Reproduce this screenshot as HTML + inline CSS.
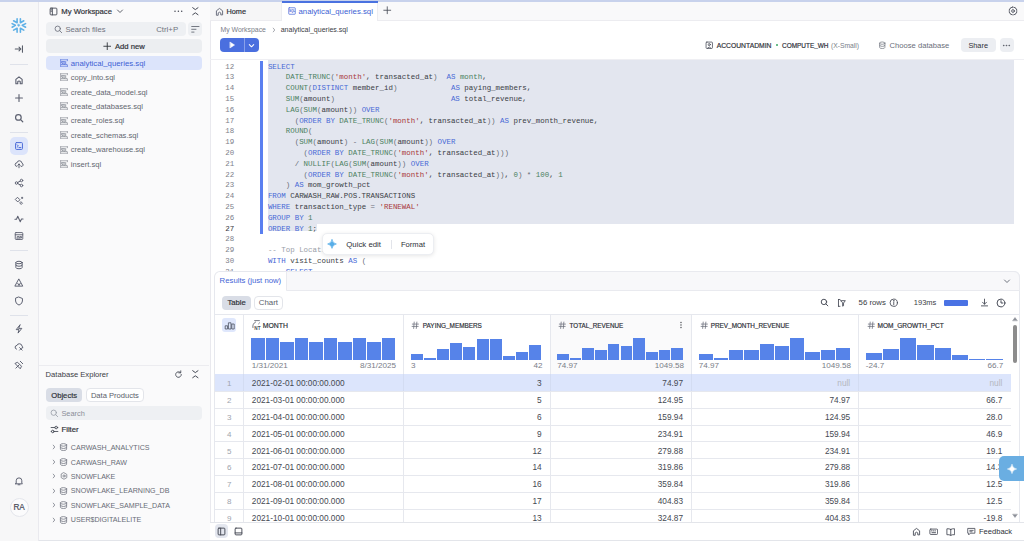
<!DOCTYPE html><html><head><meta charset="utf-8"><style>
html,body{margin:0;padding:0;width:1024px;height:541px;overflow:hidden;background:#fff;font-family:"Liberation Sans",sans-serif;}
.t{position:absolute;white-space:nowrap;}
.code{position:absolute;font-family:"Liberation Mono",monospace;font-size:7.45px;white-space:pre;line-height:10.75px;color:#3a3d45;}
.k{color:#4869d6}.f{color:#4a7f5e}.s{color:#a8383a}.c{color:#9a9ea8}.p{color:#6a6e78}
</style></head><body>
<div style="position:absolute;left:0px;top:0px;width:1024px;height:2px;background:#c8d2ec"></div>
<div style="position:absolute;left:0px;top:2px;width:38px;height:539px;background:#f7f7f8;border-right:1px solid #e9e9ee"></div>
<svg style="position:absolute;left:10px;top:17px" width="18" height="17" viewBox="10 17 18 17" fill="none" stroke="#5eb0e6" stroke-width="1.6" stroke-linecap="round" stroke-linejoin="round"><path d="M17.1 18.8 V22.7 L13.6 20.8 M20.4 18.8 V22.7 L23.8 20.8 M12.1 23.6 L15.3 25.3 L12.1 27.2 M25.6 23.6 L22.3 25.3 L25.6 27.2 M17.1 32.2 V28.2 L13.6 30.1 M20.4 32.2 V28.2 L23.8 30.1"/><path d="M18.75 24.1 L19.9 25.3 L18.75 26.5 L17.6 25.3 Z" fill="#5eb0e6" stroke-width="0.6"/></svg>
<svg style="position:absolute;left:14.00px;top:44.30px" width="10" height="10" viewBox="0 0 16 16" fill="none" stroke="#555a66" stroke-width="1.68" stroke-linecap="round" stroke-linejoin="round"><path d="M2 8 H11 M8 5 L11 8 L8 11 M13.5 3 V13"/></svg>
<div style="position:absolute;left:10px;top:64px;width:18px;height:1px;background:#dfe2ea"></div>
<svg style="position:absolute;left:14.00px;top:74.50px" width="10" height="10" viewBox="0 0 16 16" fill="none" stroke="#5c6070" stroke-width="1.80" stroke-linecap="round" stroke-linejoin="round"><path d="M3 14 V7 L8 3 L13 7 V14 H10 V10.5 Q8 8.5 6 10.5 V14 Z"/></svg>
<svg style="position:absolute;left:14.00px;top:93.30px" width="10" height="10" viewBox="0 0 16 16" fill="none" stroke="#5c6070" stroke-width="1.80" stroke-linecap="round" stroke-linejoin="round"><path d="M8 2.5 V13.5 M2.5 8 H13.5"/></svg>
<svg style="position:absolute;left:14.00px;top:112.50px" width="10" height="10" viewBox="0 0 16 16" fill="none" stroke="#5c6070" stroke-width="1.92" stroke-linecap="round" stroke-linejoin="round"><circle cx="7" cy="7" r="4.5"/><path d="M10.5 10.5 L14 14"/></svg>
<div style="position:absolute;left:10px;top:132px;width:18px;height:1px;background:#dfe2ea"></div>
<div style="position:absolute;left:10px;top:137.3px;width:18px;height:18px;background:#dce4fb;border-radius:5px"></div>
<svg style="position:absolute;left:14.00px;top:141.20px" width="10" height="10" viewBox="0 0 16 16" fill="none" stroke="#4a6ad8" stroke-width="1.56" stroke-linecap="round" stroke-linejoin="round"><rect x="2.5" y="2.5" width="11" height="11" rx="1.5"/><path d="M5 6 L7 8 L5 10 M8 10.5 H11"/></svg>
<svg style="position:absolute;left:14.00px;top:159.40px" width="10" height="10" viewBox="0 0 16 16" fill="none" stroke="#5c6070" stroke-width="1.56" stroke-linecap="round" stroke-linejoin="round"><path d="M4.5 12 Q1.5 11.5 1.8 8.5 Q2.2 6 4.8 6 Q5.5 2.5 9 2.8 Q12.5 3.2 12.8 6.8 Q15 7.5 14.5 10 Q14 12 11.5 12 M8 8 V14 M6 10 L8 8 L10 10"/></svg>
<svg style="position:absolute;left:14.00px;top:177.50px" width="10" height="10" viewBox="0 0 16 16" fill="none" stroke="#5c6070" stroke-width="1.56" stroke-linecap="round" stroke-linejoin="round"><circle cx="4" cy="8" r="2"/><circle cx="12" cy="4" r="2"/><circle cx="12" cy="12" r="2"/><path d="M6 7 L10 5 M6 9 L10 11"/></svg>
<svg style="position:absolute;left:14.00px;top:195.50px" width="10" height="10" viewBox="0 0 16 16" fill="none" stroke="#5c6070" stroke-width="1.56" stroke-linecap="round" stroke-linejoin="round"><path d="M6 2.5 L9.5 6 L6 9.5 L2.5 6 Z M11.5 9.5 L13.5 11.5 L11.5 13.5 L9.5 11.5 Z M13 2 V4 M12 3 H14"/></svg>
<svg style="position:absolute;left:14.00px;top:213.70px" width="10" height="10" viewBox="0 0 16 16" fill="none" stroke="#5c6070" stroke-width="1.68" stroke-linecap="round" stroke-linejoin="round"><path d="M1.5 8.5 H4 L6 3.5 L10 12.5 L12 8 H14.5"/></svg>
<svg style="position:absolute;left:14.00px;top:231.40px" width="10" height="10" viewBox="0 0 16 16" fill="none" stroke="#5c6070" stroke-width="1.44" stroke-linecap="round" stroke-linejoin="round"><rect x="2" y="2.5" width="12" height="11" rx="1.2"/><path d="M2 6 H14 M5 13.5 V9 H8 V13.5 M10 9 H12 V11 H10 Z"/></svg>
<div style="position:absolute;left:10px;top:250px;width:18px;height:1px;background:#dfe2ea"></div>
<svg style="position:absolute;left:14.00px;top:259.90px" width="10" height="10" viewBox="0 0 16 16" fill="none" stroke="#5c6070" stroke-width="1.56" stroke-linecap="round" stroke-linejoin="round"><ellipse cx="8" cy="4" rx="5" ry="2"/><path d="M3 4 V12 Q3 14 8 14 Q13 14 13 12 V4 M3 8 Q3 10 8 10 Q13 10 13 8"/></svg>
<svg style="position:absolute;left:14.00px;top:277.80px" width="10" height="10" viewBox="0 0 16 16" fill="none" stroke="#5c6070" stroke-width="1.56" stroke-linecap="round" stroke-linejoin="round"><path d="M8 2 L14 13 H2 Z M6 8.5 L8 12 L10 8.5"/></svg>
<svg style="position:absolute;left:14.00px;top:296.00px" width="10" height="10" viewBox="0 0 16 16" fill="none" stroke="#5c6070" stroke-width="1.56" stroke-linecap="round" stroke-linejoin="round"><path d="M8 1.8 L13.5 4 V8 Q13.5 12.5 8 14.5 Q2.5 12.5 2.5 8 V4 Z"/></svg>
<div style="position:absolute;left:10px;top:315px;width:18px;height:1px;background:#dfe2ea"></div>
<svg style="position:absolute;left:14.00px;top:323.70px" width="10" height="10" viewBox="0 0 16 16" fill="none" stroke="#5c6070" stroke-width="1.56" stroke-linecap="round" stroke-linejoin="round"><path d="M9.5 1.5 L3.5 9 H8 L6.5 14.5 L12.5 7 H8 Z"/></svg>
<svg style="position:absolute;left:14.00px;top:341.90px" width="10" height="10" viewBox="0 0 16 16" fill="none" stroke="#5c6070" stroke-width="1.56" stroke-linecap="round" stroke-linejoin="round"><path d="M4 11.5 Q1.5 11 1.8 8 Q2.2 5.5 4.8 5.5 Q5.5 2.5 9 2.8 Q12.5 3.2 12.8 6.5 Q14.5 7.5 14 9.5 M9 9 L13 13 M9 13 L13 9"/></svg>
<svg style="position:absolute;left:14.00px;top:359.90px" width="10" height="10" viewBox="0 0 16 16" fill="none" stroke="#5c6070" stroke-width="1.56" stroke-linecap="round" stroke-linejoin="round"><path d="M3 13 L8 8 M6 4 L12 10 L10 14 L2 6 Z M10 2 L14 6"/></svg>
<svg style="position:absolute;left:14.00px;top:475.80px" width="10" height="10" viewBox="0 0 16 16" fill="none" stroke="#5c6070" stroke-width="1.56" stroke-linecap="round" stroke-linejoin="round"><path d="M3.5 11.5 V7.5 Q3.5 3 8 3 Q12.5 3 12.5 7.5 V11.5 L13.5 12.5 H2.5 Z M6.5 14 H9.5"/></svg>
<div style="position:absolute;left:9.5px;top:497.7px;width:19px;height:19px;box-sizing:border-box;border:1px solid #e4e6ec;border-radius:50%;background:#fbfbfc"></div>
<div class="t" style="left:-31.00px;width:100px;text-align:center;top:502.30px;font-size:8.2px;color:#454955;font-weight:400;line-height:12px;letter-spacing:-0.3px;-webkit-text-stroke:0.18px #454955;">RA</div>
<div style="position:absolute;left:39px;top:2px;width:171px;height:539px;background:#fafafb;border-right:1px solid #e9e9ee"></div>
<svg style="position:absolute;left:49.00px;top:6.70px" width="9" height="9" viewBox="0 0 16 16" fill="none" stroke="#444854" stroke-width="1.56" stroke-linecap="round" stroke-linejoin="round"><rect x="2" y="2" width="12" height="12" rx="1.5"/><path d="M6 2 V14 M3.5 5 H4.5 M3.5 7.5 H4.5"/></svg>
<div class="t" style="left:61.3px;top:5.90px;font-size:7.69px;color:#2e3138;font-weight:400;line-height:12px;-webkit-text-stroke:0.18px #2e3138;">My Workspace</div>
<svg style="position:absolute;left:115.60px;top:7.20px" width="8" height="8" viewBox="0 0 16 16" fill="none" stroke="#444854" stroke-width="1.68" stroke-linecap="round" stroke-linejoin="round"><path d="M3 6 L8 11 L13 6"/></svg>
<svg style="position:absolute;left:170px;top:6px" width="16" height="10" viewBox="170 6 16 10" fill="#444854" stroke="#444854" stroke-width="0" stroke-linecap="round" stroke-linejoin="round"><circle cx="175" cy="11.3" r="0.75"/><circle cx="178.35" cy="11.3" r="0.75"/><circle cx="181.7" cy="11.3" r="0.75"/></svg>
<svg style="position:absolute;left:190px;top:5px" width="10" height="12" viewBox="190 5 10 12" fill="none" stroke="#444854" stroke-width="1.0" stroke-linecap="round" stroke-linejoin="round"><path d="M192.7 7.7 L195.3 9.6 L198 7.7 M192.7 14.7 L195.3 12.8 L198 14.7"/></svg>
<div style="position:absolute;left:46.2px;top:22.1px;width:139.4px;height:14px;background:#eef0f3;border-radius:4px"></div>
<svg style="position:absolute;left:53.75px;top:24.95px" width="8.5" height="8.5" viewBox="0 0 16 16" fill="none" stroke="#6a6e7a" stroke-width="1.56" stroke-linecap="round" stroke-linejoin="round"><circle cx="7" cy="7" r="5"/><path d="M10.7 10.7 L14.5 14.5"/></svg>
<div class="t" style="left:65.5px;top:23.90px;font-size:7.66px;color:#6f7380;font-weight:400;line-height:12px;">Search files</div>
<div class="t" style="right:845.90px;top:23.90px;font-size:7.8px;color:#6f7380;font-weight:400;line-height:12px;">Ctrl+P</div>
<div style="position:absolute;left:188px;top:22.1px;width:14.2px;height:14px;background:#eef0f3;border-radius:4px"></div>
<svg style="position:absolute;left:189px;top:24px" width="12" height="10" viewBox="189 24 12 10" fill="none" stroke="#555a66" stroke-width="0.8" stroke-linecap="round" stroke-linejoin="round"><path d="M191.7 26.5 H199 M191.7 29.3 H196 M191.7 32.1 H194"/></svg>
<div style="position:absolute;left:46.2px;top:39.1px;width:156px;height:14.1px;background:#eceef1;border-radius:4px"></div>
<svg style="position:absolute;left:102.95px;top:41.85px" width="8.5" height="8.5" viewBox="0 0 16 16" fill="none" stroke="#2e3138" stroke-width="1.68" stroke-linecap="round" stroke-linejoin="round"><path d="M8 1.5 V14.5 M1.5 8 H14.5"/></svg>
<div class="t" style="left:114.9px;top:40.80px;font-size:7.68px;color:#2e3138;font-weight:400;line-height:12px;-webkit-text-stroke:0.18px #2e3138;">Add new</div>
<div style="position:absolute;left:46.2px;top:56.1px;width:156px;height:13.9px;background:#dce4fb;border-radius:4px"></div>
<svg style="position:absolute;left:59.60px;top:59.00px" width="8" height="8" viewBox="0 0 16 16" fill="none" stroke="#4464d6" stroke-width="1.20" stroke-linecap="round" stroke-linejoin="round"><path d="M1.2 1.5 H14.8 M1.2 14.5 H14.8 M1.2 1.5 V14.5 M14.8 1.5 V3.5 M14.8 12.5 V14.5" stroke-width="1.2"/><path d="M5.4 5 H2.8 V7.8 H5.2 V11 H2.6 M7 5 H9.6 V11 H7 Z M9 10 L10.4 11.6 M11.4 5 V11 H14" stroke-width="1.25"/></svg>
<div class="t" style="left:70.8px;top:57.70px;font-size:7.79px;color:#3c5fd4;font-weight:400;line-height:12px;">analytical<span style="position:relative;top:-0.8px">_</span>queries.sql</div>
<svg style="position:absolute;left:59.60px;top:73.43px" width="8" height="8" viewBox="0 0 16 16" fill="none" stroke="#7c808a" stroke-width="1.20" stroke-linecap="round" stroke-linejoin="round"><path d="M1.2 1.5 H14.8 M1.2 14.5 H14.8 M1.2 1.5 V14.5 M14.8 1.5 V3.5 M14.8 12.5 V14.5" stroke-width="1.2"/><path d="M5.4 5 H2.8 V7.8 H5.2 V11 H2.6 M7 5 H9.6 V11 H7 Z M9 10 L10.4 11.6 M11.4 5 V11 H14" stroke-width="1.25"/></svg>
<div class="t" style="left:70.8px;top:72.13px;font-size:7.58px;color:#62666f;font-weight:400;line-height:12px;">copy<span style="position:relative;top:-0.8px">_</span>into.sql</div>
<svg style="position:absolute;left:59.60px;top:87.86px" width="8" height="8" viewBox="0 0 16 16" fill="none" stroke="#7c808a" stroke-width="1.20" stroke-linecap="round" stroke-linejoin="round"><path d="M1.2 1.5 H14.8 M1.2 14.5 H14.8 M1.2 1.5 V14.5 M14.8 1.5 V3.5 M14.8 12.5 V14.5" stroke-width="1.2"/><path d="M5.4 5 H2.8 V7.8 H5.2 V11 H2.6 M7 5 H9.6 V11 H7 Z M9 10 L10.4 11.6 M11.4 5 V11 H14" stroke-width="1.25"/></svg>
<div class="t" style="left:70.8px;top:86.56px;font-size:7.58px;color:#62666f;font-weight:400;line-height:12px;">create<span style="position:relative;top:-0.8px">_</span>data<span style="position:relative;top:-0.8px">_</span>model.sql</div>
<svg style="position:absolute;left:59.60px;top:102.29px" width="8" height="8" viewBox="0 0 16 16" fill="none" stroke="#7c808a" stroke-width="1.20" stroke-linecap="round" stroke-linejoin="round"><path d="M1.2 1.5 H14.8 M1.2 14.5 H14.8 M1.2 1.5 V14.5 M14.8 1.5 V3.5 M14.8 12.5 V14.5" stroke-width="1.2"/><path d="M5.4 5 H2.8 V7.8 H5.2 V11 H2.6 M7 5 H9.6 V11 H7 Z M9 10 L10.4 11.6 M11.4 5 V11 H14" stroke-width="1.25"/></svg>
<div class="t" style="left:70.8px;top:100.99px;font-size:7.58px;color:#62666f;font-weight:400;line-height:12px;">create<span style="position:relative;top:-0.8px">_</span>databases.sql</div>
<svg style="position:absolute;left:59.60px;top:116.72px" width="8" height="8" viewBox="0 0 16 16" fill="none" stroke="#7c808a" stroke-width="1.20" stroke-linecap="round" stroke-linejoin="round"><path d="M1.2 1.5 H14.8 M1.2 14.5 H14.8 M1.2 1.5 V14.5 M14.8 1.5 V3.5 M14.8 12.5 V14.5" stroke-width="1.2"/><path d="M5.4 5 H2.8 V7.8 H5.2 V11 H2.6 M7 5 H9.6 V11 H7 Z M9 10 L10.4 11.6 M11.4 5 V11 H14" stroke-width="1.25"/></svg>
<div class="t" style="left:70.8px;top:115.42px;font-size:7.58px;color:#62666f;font-weight:400;line-height:12px;">create<span style="position:relative;top:-0.8px">_</span>roles.sql</div>
<svg style="position:absolute;left:59.60px;top:131.15px" width="8" height="8" viewBox="0 0 16 16" fill="none" stroke="#7c808a" stroke-width="1.20" stroke-linecap="round" stroke-linejoin="round"><path d="M1.2 1.5 H14.8 M1.2 14.5 H14.8 M1.2 1.5 V14.5 M14.8 1.5 V3.5 M14.8 12.5 V14.5" stroke-width="1.2"/><path d="M5.4 5 H2.8 V7.8 H5.2 V11 H2.6 M7 5 H9.6 V11 H7 Z M9 10 L10.4 11.6 M11.4 5 V11 H14" stroke-width="1.25"/></svg>
<div class="t" style="left:70.8px;top:129.85px;font-size:7.58px;color:#62666f;font-weight:400;line-height:12px;">create<span style="position:relative;top:-0.8px">_</span>schemas.sql</div>
<svg style="position:absolute;left:59.60px;top:145.58px" width="8" height="8" viewBox="0 0 16 16" fill="none" stroke="#7c808a" stroke-width="1.20" stroke-linecap="round" stroke-linejoin="round"><path d="M1.2 1.5 H14.8 M1.2 14.5 H14.8 M1.2 1.5 V14.5 M14.8 1.5 V3.5 M14.8 12.5 V14.5" stroke-width="1.2"/><path d="M5.4 5 H2.8 V7.8 H5.2 V11 H2.6 M7 5 H9.6 V11 H7 Z M9 10 L10.4 11.6 M11.4 5 V11 H14" stroke-width="1.25"/></svg>
<div class="t" style="left:70.8px;top:144.28px;font-size:7.58px;color:#62666f;font-weight:400;line-height:12px;">create<span style="position:relative;top:-0.8px">_</span>warehouse.sql</div>
<svg style="position:absolute;left:59.60px;top:160.01px" width="8" height="8" viewBox="0 0 16 16" fill="none" stroke="#7c808a" stroke-width="1.20" stroke-linecap="round" stroke-linejoin="round"><path d="M1.2 1.5 H14.8 M1.2 14.5 H14.8 M1.2 1.5 V14.5 M14.8 1.5 V3.5 M14.8 12.5 V14.5" stroke-width="1.2"/><path d="M5.4 5 H2.8 V7.8 H5.2 V11 H2.6 M7 5 H9.6 V11 H7 Z M9 10 L10.4 11.6 M11.4 5 V11 H14" stroke-width="1.25"/></svg>
<div class="t" style="left:70.8px;top:158.71px;font-size:7.58px;color:#62666f;font-weight:400;line-height:12px;">insert.sql</div>
<div style="position:absolute;left:39px;top:365px;width:170px;height:1px;background:#ececf0"></div>
<div class="t" style="left:45.6px;top:368.90px;font-size:7.62px;color:#3a3d45;font-weight:400;line-height:12px;">Database Explorer</div>
<svg style="position:absolute;left:173.90px;top:369.70px" width="9" height="9" viewBox="0 0 16 16" fill="none" stroke="#444854" stroke-width="1.56" stroke-linecap="round" stroke-linejoin="round"><path d="M13 8 A5 5 0 1 1 11.5 4.5 M12 1.5 V5 H8.5"/></svg>
<svg style="position:absolute;left:190px;top:368px" width="10" height="12" viewBox="190 368 10 12" fill="none" stroke="#444854" stroke-width="1.0" stroke-linecap="round" stroke-linejoin="round"><path d="M192.7 370.7 L195.3 372.6 L198 370.7 M192.7 377.7 L195.3 375.8 L198 377.7"/></svg>
<div style="position:absolute;left:46px;top:387.9px;width:36.4px;height:14px;background:#d9dde6;border-radius:4px"></div>
<div class="t" style="left:14.20px;width:100px;text-align:center;top:389.60px;font-size:7.67px;color:#2e3138;font-weight:400;line-height:12px;-webkit-text-stroke:0.18px #2e3138;">Objects</div>
<div style="position:absolute;left:85.6px;top:387.9px;width:58.7px;height:14px;box-sizing:border-box;background:#fff;border:1px solid #e3e5ea;border-radius:4px"></div>
<div class="t" style="left:64.90px;width:100px;text-align:center;top:389.60px;font-size:7.58px;color:#5a5e6a;font-weight:400;line-height:12px;">Data Products</div>
<div style="position:absolute;left:46px;top:405.8px;width:156px;height:14px;background:#eef0f3;border-radius:4px"></div>
<svg style="position:absolute;left:50.25px;top:408.55px" width="8.5" height="8.5" viewBox="0 0 16 16" fill="none" stroke="#9a9ea8" stroke-width="1.56" stroke-linecap="round" stroke-linejoin="round"><circle cx="7" cy="7" r="5"/><path d="M10.7 10.7 L14.5 14.5"/></svg>
<div class="t" style="left:61.4px;top:407.50px;font-size:7.4px;color:#8a8e98;font-weight:400;line-height:12px;">Search</div>
<svg style="position:absolute;left:49.70px;top:425.10px" width="9" height="9" viewBox="0 0 16 16" fill="none" stroke="#444854" stroke-width="1.56" stroke-linecap="round" stroke-linejoin="round"><circle cx="11" cy="4.5" r="2.3"/><circle cx="5" cy="11.5" r="2.3"/><path d="M2 4.5 H8.5 M13.5 4.5 H14 M2 11.5 H2.5 M7.5 11.5 H14"/></svg>
<div class="t" style="left:61.4px;top:424.30px;font-size:7.8px;color:#2e3138;font-weight:400;line-height:12px;-webkit-text-stroke:0.18px #2e3138;">Filter</div>
<svg style="position:absolute;left:51.00px;top:444.40px" width="6" height="6" viewBox="0 0 16 16" fill="none" stroke="#6a6e7a" stroke-width="1.92" stroke-linecap="round" stroke-linejoin="round"><path d="M6 3 L10 8 L6 13"/></svg>
<svg style="position:absolute;left:59px;top:442.4px" width="9" height="10" viewBox="59 442.4 9 10" fill="none" stroke="#7c808a" stroke-width="0.85" stroke-linecap="round" stroke-linejoin="round"><ellipse cx="63.5" cy="445.30" rx="3.1" ry="1.3"/><path d="M60.4 445.30 V449.60 Q60.4 450.90 63.5 450.90 Q66.6 450.90 66.6 449.60 V445.30 M60.4 447.60 Q60.4 448.90 63.5 448.90 Q66.6 448.90 66.6 447.60"/></svg>
<div class="t" style="left:70.8px;top:442.10px;font-size:7.1px;color:#686c76;font-weight:400;line-height:12px;">CARWASH<span style="position:relative;top:-0.8px">_</span>ANALYTICS</div>
<svg style="position:absolute;left:51.00px;top:458.82px" width="6" height="6" viewBox="0 0 16 16" fill="none" stroke="#6a6e7a" stroke-width="1.92" stroke-linecap="round" stroke-linejoin="round"><path d="M6 3 L10 8 L6 13"/></svg>
<svg style="position:absolute;left:59px;top:456.82px" width="9" height="10" viewBox="59 456.82 9 10" fill="none" stroke="#7c808a" stroke-width="0.85" stroke-linecap="round" stroke-linejoin="round"><ellipse cx="63.5" cy="459.72" rx="3.1" ry="1.3"/><path d="M60.4 459.72 V464.02 Q60.4 465.32 63.5 465.32 Q66.6 465.32 66.6 464.02 V459.72 M60.4 462.02 Q60.4 463.32 63.5 463.32 Q66.6 463.32 66.6 462.02"/></svg>
<div class="t" style="left:70.8px;top:456.52px;font-size:7.1px;color:#686c76;font-weight:400;line-height:12px;">CARWASH<span style="position:relative;top:-0.8px">_</span>RAW</div>
<svg style="position:absolute;left:51.00px;top:473.24px" width="6" height="6" viewBox="0 0 16 16" fill="none" stroke="#6a6e7a" stroke-width="1.92" stroke-linecap="round" stroke-linejoin="round"><path d="M6 3 L10 8 L6 13"/></svg>
<svg style="position:absolute;left:59.50px;top:472.24px" width="8" height="8" viewBox="0 0 16 16" fill="none" stroke="#7c808a" stroke-width="1.62" stroke-linecap="round" stroke-linejoin="round"><circle cx="8" cy="8" r="2.2"/><path d="M8 1.5 L13.6 4.75 V11.25 L8 14.5 L2.4 11.25 V4.75 Z"/></svg>
<div class="t" style="left:70.8px;top:470.94px;font-size:7.1px;color:#686c76;font-weight:400;line-height:12px;">SNOWFLAKE</div>
<svg style="position:absolute;left:51.00px;top:487.66px" width="6" height="6" viewBox="0 0 16 16" fill="none" stroke="#6a6e7a" stroke-width="1.92" stroke-linecap="round" stroke-linejoin="round"><path d="M6 3 L10 8 L6 13"/></svg>
<svg style="position:absolute;left:59px;top:485.66px" width="9" height="10" viewBox="59 485.66 9 10" fill="none" stroke="#7c808a" stroke-width="0.85" stroke-linecap="round" stroke-linejoin="round"><ellipse cx="63.5" cy="488.56" rx="3.1" ry="1.3"/><path d="M60.4 488.56 V492.86 Q60.4 494.16 63.5 494.16 Q66.6 494.16 66.6 492.86 V488.56 M60.4 490.86 Q60.4 492.16 63.5 492.16 Q66.6 492.16 66.6 490.86"/></svg>
<div class="t" style="left:70.8px;top:485.36px;font-size:7.1px;color:#686c76;font-weight:400;line-height:12px;">SNOWFLAKE<span style="position:relative;top:-0.8px">_</span>LEARNING<span style="position:relative;top:-0.8px">_</span>DB</div>
<svg style="position:absolute;left:51.00px;top:502.08px" width="6" height="6" viewBox="0 0 16 16" fill="none" stroke="#6a6e7a" stroke-width="1.92" stroke-linecap="round" stroke-linejoin="round"><path d="M6 3 L10 8 L6 13"/></svg>
<svg style="position:absolute;left:59px;top:500.08px" width="9" height="10" viewBox="59 500.08 9 10" fill="none" stroke="#7c808a" stroke-width="0.85" stroke-linecap="round" stroke-linejoin="round"><ellipse cx="63.5" cy="502.98" rx="3.1" ry="1.3"/><path d="M60.4 502.98 V507.28 Q60.4 508.58 63.5 508.58 Q66.6 508.58 66.6 507.28 V502.98 M60.4 505.28 Q60.4 506.58 63.5 506.58 Q66.6 506.58 66.6 505.28"/></svg>
<div class="t" style="left:70.8px;top:499.78px;font-size:7.1px;color:#686c76;font-weight:400;line-height:12px;">SNOWFLAKE<span style="position:relative;top:-0.8px">_</span>SAMPLE<span style="position:relative;top:-0.8px">_</span>DATA</div>
<svg style="position:absolute;left:51.00px;top:516.50px" width="6" height="6" viewBox="0 0 16 16" fill="none" stroke="#6a6e7a" stroke-width="1.92" stroke-linecap="round" stroke-linejoin="round"><path d="M6 3 L10 8 L6 13"/></svg>
<svg style="position:absolute;left:59px;top:514.5px" width="9" height="10" viewBox="59 514.5 9 10" fill="none" stroke="#7c808a" stroke-width="0.85" stroke-linecap="round" stroke-linejoin="round"><ellipse cx="63.5" cy="517.40" rx="3.1" ry="1.3"/><path d="M60.4 517.40 V521.70 Q60.4 523.00 63.5 523.00 Q66.6 523.00 66.6 521.70 V517.40 M60.4 519.70 Q60.4 521.00 63.5 521.00 Q66.6 521.00 66.6 519.70"/></svg>
<div class="t" style="left:70.8px;top:514.20px;font-size:7.1px;color:#686c76;font-weight:400;line-height:12px;">USER$DIGITALELITE</div>
<div style="position:absolute;left:39px;top:539.8px;width:985px;height:1.2px;background:#e3e5ea"></div>
<div style="position:absolute;left:210px;top:2px;width:814px;height:19px;background:#f9f9fa;border-bottom:1px solid #ececf0;box-sizing:border-box"></div>
<div style="position:absolute;left:210px;top:2px;width:72px;height:19px;background:#f6f6f7;border-right:1px solid #ececf0;border-bottom:1px solid #ececf0;box-sizing:border-box"></div>
<svg style="position:absolute;left:214.80px;top:7.00px" width="9" height="9" viewBox="0 0 16 16" fill="none" stroke="#5c6070" stroke-width="1.56" stroke-linecap="round" stroke-linejoin="round"><path d="M2.5 14 V6.8 L8 2.5 L13.5 6.8 V14 H10.3 V10.5 Q8 8 5.7 10.5 V14 Z"/></svg>
<div class="t" style="left:226.5px;top:6.20px;font-size:7.31px;color:#2e3138;font-weight:400;line-height:12px;-webkit-text-stroke:0.18px #2e3138;">Home</div>
<div style="position:absolute;left:282px;top:2px;width:96px;height:19px;background:#fff;border-right:1px solid #ececf0;box-sizing:border-box"></div>
<div style="position:absolute;left:282px;top:1px;width:96px;height:1.8px;background:#4a72e0"></div>
<svg style="position:absolute;left:287.60px;top:7.30px" width="8" height="8" viewBox="0 0 16 16" fill="none" stroke="#4464d6" stroke-width="1.44" stroke-linecap="round" stroke-linejoin="round"><rect x="1.5" y="1.5" width="13" height="13" rx="1"/><text x="8" y="10.3" font-size="6" text-anchor="middle" fill="#4464d6" stroke="none" font-family="Liberation Sans" font-weight="700">SQL</text></svg>
<div class="t" style="left:298.5px;top:6.20px;font-size:7.79px;color:#3c5fd4;font-weight:400;line-height:12px;">analytical<span style="position:relative;top:-0.8px">_</span>queries.sql</div>
<svg style="position:absolute;left:383.05px;top:6.35px" width="8.5" height="8.5" viewBox="0 0 16 16" fill="none" stroke="#444854" stroke-width="1.56" stroke-linecap="round" stroke-linejoin="round"><path d="M8 1.5 V14.5 M1.5 8 H14.5"/></svg>
<svg style="position:absolute;left:1007.90px;top:5.80px" width="10" height="10" viewBox="0 0 16 16" fill="none" stroke="#444854" stroke-width="1.32" stroke-linecap="round" stroke-linejoin="round"><circle cx="8" cy="8" r="2.2"/><path d="M8 1.2 L9.4 2.6 L11.4 2.2 L12 4.1 L13.9 4.8 L13.5 6.7 L14.8 8 L13.5 9.3 L13.9 11.2 L12 11.9 L11.4 13.8 L9.4 13.4 L8 14.8 L6.6 13.4 L4.6 13.8 L4 11.9 L2.1 11.2 L2.5 9.3 L1.2 8 L2.5 6.7 L2.1 4.8 L4 4.1 L4.6 2.2 L6.6 2.6 Z"/></svg>
<div class="t" style="left:220.4px;top:24.30px;font-size:6.92px;color:#7a7e88;font-weight:400;line-height:12px;">My Workspace</div>
<svg style="position:absolute;left:271.00px;top:26.60px" width="6" height="6" viewBox="0 0 16 16" fill="none" stroke="#7a7e88" stroke-width="1.80" stroke-linecap="round" stroke-linejoin="round"><path d="M6 3 L10 8 L6 13"/></svg>
<div class="t" style="left:280.7px;top:24.30px;font-size:7.02px;color:#3a3d45;font-weight:400;line-height:12px;">analytical<span style="position:relative;top:-0.8px">_</span>queries.sql</div>
<div style="position:absolute;left:220.4px;top:37.9px;width:38.8px;height:14.5px;background:#4a6fdf;border-radius:4px"></div>
<div style="position:absolute;left:244px;top:37.9px;width:0.7px;height:14.5px;background:rgba(255,255,255,0.35)"></div>
<svg style="position:absolute;left:228.20px;top:41.20px" width="8" height="8" viewBox="0 0 16 16" fill="none" stroke="#fff" stroke-width="1.20" stroke-linecap="round" stroke-linejoin="round"><path d="M4.5 2.5 L13 8 L4.5 13.5 Z" fill="#fff"/></svg>
<svg style="position:absolute;left:248.30px;top:41.70px" width="7" height="7" viewBox="0 0 16 16" fill="none" stroke="#fff" stroke-width="2.40" stroke-linecap="round" stroke-linejoin="round"><path d="M3 6 L8 11 L13 6"/></svg>
<svg style="position:absolute;left:705.35px;top:40.75px" width="8.5" height="8.5" viewBox="0 0 16 16" fill="none" stroke="#444854" stroke-width="1.44" stroke-linecap="round" stroke-linejoin="round"><rect x="2" y="2" width="12" height="12" rx="1.5"/><circle cx="8" cy="6.8" r="2"/><path d="M4.5 13.5 Q8 8.5 11.5 13.5"/></svg>
<div class="t" style="left:716.7px;top:39.70px;font-size:6.77px;color:#2e3138;font-weight:400;line-height:12px;-webkit-text-stroke:0.18px #2e3138;">ACCOUNTADMIN</div>
<div style="position:absolute;left:776.4px;top:44px;width:2px;height:2px;background:#3aa864;border-radius:50%"></div>
<div class="t" style="left:782px;top:39.70px;font-size:6.45px;color:#2e3138;font-weight:400;line-height:12px;-webkit-text-stroke:0.18px #2e3138;">COMPUTE<span style="position:relative;top:-0.8px">_</span>WH</div>
<div class="t" style="left:831px;top:39.70px;font-size:6.72px;color:#7a7e88;font-weight:400;line-height:12px;">(X-Small)</div>
<svg style="position:absolute;left:877.75px;top:40.75px" width="8.5" height="8.5" viewBox="0 0 16 16" fill="none" stroke="#7a7e88" stroke-width="1.44" stroke-linecap="round" stroke-linejoin="round"><ellipse cx="8" cy="4" rx="5" ry="2.2"/><path d="M3 4 V12 Q3 14.2 8 14.2 Q13 14.2 13 12 V4 M3 8 Q3 10.2 8 10.2 Q13 10.2 13 8"/></svg>
<div class="t" style="left:889.6px;top:39.70px;font-size:7.62px;color:#6a6e7a;font-weight:400;line-height:12px;">Choose database</div>
<div style="position:absolute;left:960.7px;top:38.2px;width:34.9px;height:14px;background:#eceef2;border-radius:4px"></div>
<div class="t" style="left:928.20px;width:100px;text-align:center;top:39.90px;font-size:7.35px;color:#2e3138;font-weight:400;line-height:12px;">Share</div>
<div style="position:absolute;left:999.8px;top:38.2px;width:14.1px;height:14px;background:#eceef2;border-radius:4px"></div>
<svg style="position:absolute;left:1002.30px;top:40.70px" width="9" height="9" viewBox="0 0 16 16" fill="none" stroke="#444854" stroke-width="1.92" stroke-linecap="round" stroke-linejoin="round"><circle cx="3" cy="8" r="0.5"/><circle cx="8" cy="8" r="0.5"/><circle cx="13" cy="8" r="0.5"/></svg>
<div style="position:absolute;left:210px;top:58.5px;width:814px;height:1px;background:#efeff3"></div>
<div style="position:absolute;left:267.9px;top:59.8px;width:746.2px;height:161.25px;background:#e3e6ef"></div>
<div style="position:absolute;left:267.9px;top:59.8px;width:746.2px;height:163.89999999999998px;background:#e3e6ef"></div>
<div style="position:absolute;left:267.9px;top:223.7px;width:49.10000000000002px;height:7.5px;background:#e3e6ef"></div>
<div style="position:absolute;left:260.4px;top:60.8px;width:2.5px;height:173.10000000000002px;background:#5a7ff0"></div>
<div style="position:absolute;left:210px;top:59px;width:814px;height:212px;overflow:hidden">
<div class="code" style="left:0px;width:24.3px;text-align:right;top:3.00px;color:#7c808a">12</div>
<div class="code" style="left:57.89999999999998px;top:3.00px"><span class="k">SELECT</span></div>
<div class="code" style="left:0px;width:24.3px;text-align:right;top:13.00px;color:#7c808a">13</div>
<div class="code" style="left:57.89999999999998px;top:13.00px">    <span class="f">DATE_TRUNC</span><span class="p">(</span><span class="s">'month'</span>, transacted_at<span class="p">)</span>  <span class="k">AS</span> <span class="f">month</span>,</div>
<div class="code" style="left:0px;width:24.3px;text-align:right;top:24.00px;color:#7c808a">14</div>
<div class="code" style="left:57.89999999999998px;top:24.00px">    <span class="f">COUNT</span><span class="p">(</span><span class="k">DISTINCT</span> member_id<span class="p">)</span>            <span class="k">AS</span> paying_members,</div>
<div class="code" style="left:0px;width:24.3px;text-align:right;top:35.00px;color:#7c808a">15</div>
<div class="code" style="left:57.89999999999998px;top:35.00px">    <span class="f">SUM</span><span class="p">(</span>amount<span class="p">)</span>                          <span class="k">AS</span> total_revenue,</div>
<div class="code" style="left:0px;width:24.3px;text-align:right;top:46.00px;color:#7c808a">16</div>
<div class="code" style="left:57.89999999999998px;top:46.00px">    <span class="f">LAG</span><span class="p">(</span><span class="f">SUM</span><span class="p">(</span>amount<span class="p">))</span> <span class="k">OVER</span></div>
<div class="code" style="left:0px;width:24.3px;text-align:right;top:57.00px;color:#7c808a">17</div>
<div class="code" style="left:57.89999999999998px;top:57.00px">      <span class="p">(</span><span class="k">ORDER BY</span> <span class="f">DATE_TRUNC</span><span class="p">(</span><span class="s">'month'</span>, transacted_at<span class="p">)</span><span class="p">)</span> <span class="k">AS</span> prev_month_revenue,</div>
<div class="code" style="left:0px;width:24.3px;text-align:right;top:67.00px;color:#7c808a">18</div>
<div class="code" style="left:57.89999999999998px;top:67.00px">    <span class="f">ROUND</span><span class="p">(</span></div>
<div class="code" style="left:0px;width:24.3px;text-align:right;top:78.00px;color:#7c808a">19</div>
<div class="code" style="left:57.89999999999998px;top:78.00px">      <span class="p">(</span><span class="f">SUM</span><span class="p">(</span>amount<span class="p">)</span> <span class="p">-</span> <span class="f">LAG</span><span class="p">(</span><span class="f">SUM</span><span class="p">(</span>amount<span class="p">))</span> <span class="k">OVER</span></div>
<div class="code" style="left:0px;width:24.3px;text-align:right;top:89.00px;color:#7c808a">20</div>
<div class="code" style="left:57.89999999999998px;top:89.00px">        <span class="p">(</span><span class="k">ORDER BY</span> <span class="f">DATE_TRUNC</span><span class="p">(</span><span class="s">'month'</span>, transacted_at<span class="p">)</span><span class="p">))</span></div>
<div class="code" style="left:0px;width:24.3px;text-align:right;top:100.00px;color:#7c808a">21</div>
<div class="code" style="left:57.89999999999998px;top:100.00px">      <span class="p">/</span> <span class="f">NULLIF</span><span class="p">(</span><span class="f">LAG</span><span class="p">(</span><span class="f">SUM</span><span class="p">(</span>amount<span class="p">))</span> <span class="k">OVER</span></div>
<div class="code" style="left:0px;width:24.3px;text-align:right;top:111.00px;color:#7c808a">22</div>
<div class="code" style="left:57.89999999999998px;top:111.00px">        <span class="p">(</span><span class="k">ORDER BY</span> <span class="f">DATE_TRUNC</span><span class="p">(</span><span class="s">'month'</span>, transacted_at<span class="p">)</span><span class="p">)</span>, <span class="f">0</span><span class="p">)</span> <span class="p">*</span> <span class="f">100</span>, <span class="f">1</span></div>
<div class="code" style="left:0px;width:24.3px;text-align:right;top:121.00px;color:#7c808a">23</div>
<div class="code" style="left:57.89999999999998px;top:121.00px">    <span class="p">)</span> <span class="k">AS</span> mom_growth_pct</div>
<div class="code" style="left:0px;width:24.3px;text-align:right;top:132.00px;color:#7c808a">24</div>
<div class="code" style="left:57.89999999999998px;top:132.00px"><span class="k">FROM</span> CARWASH_RAW.POS.TRANSACTIONS</div>
<div class="code" style="left:0px;width:24.3px;text-align:right;top:143.00px;color:#7c808a">25</div>
<div class="code" style="left:57.89999999999998px;top:143.00px"><span class="k">WHERE</span> transaction_type <span class="p">=</span> <span class="s">'RENEWAL'</span></div>
<div class="code" style="left:0px;width:24.3px;text-align:right;top:154.00px;color:#7c808a">26</div>
<div class="code" style="left:57.89999999999998px;top:154.00px"><span class="k">GROUP BY</span> <span class="f">1</span></div>
<div class="code" style="left:0px;width:24.3px;text-align:right;top:165.00px;color:#33363d">27</div>
<div class="code" style="left:57.89999999999998px;top:165.00px"><span class="k">ORDER BY</span> <span class="f">1</span>;</div>
<div class="code" style="left:0px;width:24.3px;text-align:right;top:175.00px;color:#7c808a">28</div>
<div class="code" style="left:57.89999999999998px;top:175.00px"></div>
<div class="code" style="left:0px;width:24.3px;text-align:right;top:186.00px;color:#7c808a">29</div>
<div class="code" style="left:57.89999999999998px;top:186.00px"><span class="c">-- Top Locations by Visit Count</span></div>
<div class="code" style="left:0px;width:24.3px;text-align:right;top:197.00px;color:#7c808a">30</div>
<div class="code" style="left:57.89999999999998px;top:197.00px"><span class="k">WITH</span> visit_counts <span class="k">AS</span> <span class="p">(</span></div>
<div class="code" style="left:0px;width:24.3px;text-align:right;top:208.00px;color:#7c808a">31</div>
<div class="code" style="left:57.89999999999998px;top:208.00px">    <span class="k">SELECT</span></div>
</div>
<div style="position:absolute;left:322px;top:232.6px;width:112.1px;height:22.7px;box-sizing:border-box;background:#fff;border:1px solid #eceef2;border-radius:5px;box-shadow:0 1px 4px rgba(0,0,0,0.10)"></div>
<svg style="position:absolute;left:326.90px;top:239.10px" width="10" height="10" viewBox="0 0 16 16" fill="none" stroke="#58aee8" stroke-width="1.08" stroke-linecap="round" stroke-linejoin="round"><path d="M8 1 Q9 7 15 8 Q9 9 8 15 Q7 9 1 8 Q7 7 8 1 Z" fill="#58aee8"/></svg>
<div class="t" style="left:346.3px;top:238.70px;font-size:7.8px;color:#2e3138;font-weight:400;line-height:12px;">Quick edit</div>
<div style="position:absolute;left:390.5px;top:239.5px;width:0.8px;height:9px;background:#e2e4ea"></div>
<div class="t" style="left:400.9px;top:238.70px;font-size:7.61px;color:#2e3138;font-weight:400;line-height:12px;">Format</div>
<div style="position:absolute;left:214px;top:271.2px;width:805.7px;height:251.4px;box-sizing:border-box;background:#fff;border:1px solid #e6e8ee;border-bottom:none;border-radius:6px 6px 0 0"></div>
<div style="position:absolute;left:286px;top:271.2px;width:733.7px;height:19.8px;box-sizing:border-box;background:#f8f8fa;border:1px solid #e9eaef;border-top-right-radius:6px"></div>
<div class="t" style="left:219.6px;top:275.10px;font-size:7.76px;color:#4464d6;font-weight:400;line-height:12px;">Results (just now)</div>
<svg style="position:absolute;left:1003.20px;top:276.80px" width="8" height="8" viewBox="0 0 16 16" fill="none" stroke="#555a66" stroke-width="1.68" stroke-linecap="round" stroke-linejoin="round"><path d="M3 6 L8 11 L13 6"/></svg>
<div style="position:absolute;left:222.2px;top:295.7px;width:28.7px;height:13.9px;background:#d9dde6;border-radius:4px"></div>
<div class="t" style="left:186.60px;width:100px;text-align:center;top:297.30px;font-size:7.7px;color:#2e3138;font-weight:400;line-height:12px;-webkit-text-stroke:0.18px #2e3138;">Table</div>
<div style="position:absolute;left:253.5px;top:295.7px;width:29.8px;height:13.9px;box-sizing:border-box;background:#fff;border:1px solid #e3e5ea;border-radius:4px"></div>
<div class="t" style="left:218.40px;width:100px;text-align:center;top:297.30px;font-size:7.9px;color:#5a5e6a;font-weight:400;line-height:12px;">Chart</div>
<svg style="position:absolute;left:820.10px;top:298.10px" width="9" height="9" viewBox="0 0 16 16" fill="none" stroke="#444854" stroke-width="1.68" stroke-linecap="round" stroke-linejoin="round"><circle cx="7" cy="7" r="4.8"/><path d="M10.5 10.5 L14 14"/></svg>
<svg style="position:absolute;left:837.05px;top:297.85px" width="9.5" height="9.5" viewBox="0 0 16 16" fill="none" stroke="#444854" stroke-width="1.44" stroke-linecap="round" stroke-linejoin="round"><path d="M2.5 2.5 V14 M2.5 2.5 H5 M2.5 14 H5 M6.5 4.5 H14 L11 8.5 V13 L9.5 13.8 V8.5 Z"/></svg>
<div class="t" style="left:858.6px;top:297.30px;font-size:7.77px;color:#3a3d45;font-weight:400;line-height:12px;">56 rows</div>
<svg style="position:absolute;left:888.65px;top:297.85px" width="9.5" height="9.5" viewBox="0 0 16 16" fill="none" stroke="#444854" stroke-width="1.44" stroke-linecap="round" stroke-linejoin="round"><circle cx="8" cy="8" r="6.2"/><path d="M8 7 V11.5"/><circle cx="8" cy="4.8" r="0.4"/></svg>
<div class="t" style="left:913.8px;top:297.30px;font-size:7.5px;color:#3a3d45;font-weight:400;line-height:12px;">193ms</div>
<div style="position:absolute;left:943.8px;top:300px;width:24px;height:5.5px;background:#4a72e4;border-radius:1px"></div>
<svg style="position:absolute;left:980.30px;top:298.10px" width="9" height="9" viewBox="0 0 16 16" fill="none" stroke="#444854" stroke-width="1.56" stroke-linecap="round" stroke-linejoin="round"><path d="M8 2 V11 M4.5 7.5 L8 11 L11.5 7.5 M2.5 14 H13.5"/></svg>
<svg style="position:absolute;left:996.30px;top:297.60px" width="10" height="10" viewBox="0 0 16 16" fill="none" stroke="#444854" stroke-width="1.56" stroke-linecap="round" stroke-linejoin="round"><circle cx="8" cy="8" r="6.3"/><path d="M8 4.3 V8 H11"/></svg>
<div style="position:absolute;left:214px;top:314.2px;width:805.5px;height:1px;background:#e6e8ee"></div>
<div style="position:absolute;left:550.5px;top:315.2px;width:140.79999999999995px;height:59.19999999999999px;background:#fafafb"></div>
<div style="position:absolute;left:243.3px;top:314.2px;width:1px;height:207.8px;background:#e6e8ee"></div>
<div style="position:absolute;left:402.9px;top:314.2px;width:1px;height:207.8px;background:#e6e8ee"></div>
<div style="position:absolute;left:549.5px;top:314.2px;width:1px;height:207.8px;background:#e6e8ee"></div>
<div style="position:absolute;left:690.8px;top:314.2px;width:1px;height:207.8px;background:#e6e8ee"></div>
<div style="position:absolute;left:858.0px;top:314.2px;width:1px;height:207.8px;background:#e6e8ee"></div>
<div style="position:absolute;left:222.2px;top:318px;width:14.2px;height:14px;background:#dfe7fc;border-radius:3px"></div>
<svg style="position:absolute;left:222px;top:318px" width="15" height="14" viewBox="222 318 15 14" fill="none" stroke="#4a5060" stroke-width="0.8" stroke-linecap="round" stroke-linejoin="round"><path d="M225.2 328.6 V325.8 H227.6 V328.6 Z M228.4 328.6 V322.8 H231 V328.6 Z M231.8 328.6 V324 H234.2 V328.6 Z"/></svg>
<svg style="position:absolute;left:250px;top:318px" width="12" height="13" viewBox="250 318 12 13" fill="none" stroke="#555a66" stroke-width="0.8" stroke-linecap="round" stroke-linejoin="round"><path d="M252.9 327.6 Q252.2 323.6 255.6 322 M254.6 320.6 H259.4 M259.6 322.8 L258.6 323.8" stroke-width="0.8"/><text x="257.4" y="329.6" font-size="4.6" text-anchor="middle" fill="#4a4e58" stroke="none" font-family="Liberation Sans" font-weight="700">NT</text></svg>
<div class="t" style="left:262.75px;top:320.10px;font-size:6.89px;color:#2e3138;font-weight:400;line-height:12px;-webkit-text-stroke:0.18px #2e3138;">MONTH</div>
<svg style="position:absolute;left:411.25px;top:321.05px" width="8.5" height="8.5" viewBox="0 0 16 16" fill="none" stroke="#6a6e7a" stroke-width="1.44" stroke-linecap="round" stroke-linejoin="round"><path d="M6 2 L5 14 M11 2 L10 14 M2.5 5.8 H14 M2 10.2 H13.5"/></svg>
<div class="t" style="left:422.8px;top:320.00px;font-size:6.4px;color:#2e3138;font-weight:400;line-height:12px;-webkit-text-stroke:0.18px #2e3138;">PAYING<span style="position:relative;top:-0.8px">_</span>MEMBERS</div>
<svg style="position:absolute;left:557.75px;top:321.05px" width="8.5" height="8.5" viewBox="0 0 16 16" fill="none" stroke="#6a6e7a" stroke-width="1.44" stroke-linecap="round" stroke-linejoin="round"><path d="M6 2 L5 14 M11 2 L10 14 M2.5 5.8 H14 M2 10.2 H13.5"/></svg>
<div class="t" style="left:569.5px;top:320.00px;font-size:6.3px;color:#2e3138;font-weight:400;line-height:12px;-webkit-text-stroke:0.18px #2e3138;">TOTAL<span style="position:relative;top:-0.8px">_</span>REVENUE</div>
<svg style="position:absolute;left:677.10px;top:321.30px" width="8" height="8" viewBox="0 0 16 16" fill="none" stroke="#2e3138" stroke-width="2.16" stroke-linecap="round" stroke-linejoin="round"><circle cx="8" cy="3" r="0.4"/><circle cx="8" cy="8" r="0.4"/><circle cx="8" cy="13" r="0.4"/></svg>
<svg style="position:absolute;left:699.75px;top:321.05px" width="8.5" height="8.5" viewBox="0 0 16 16" fill="none" stroke="#6a6e7a" stroke-width="1.44" stroke-linecap="round" stroke-linejoin="round"><path d="M6 2 L5 14 M11 2 L10 14 M2.5 5.8 H14 M2 10.2 H13.5"/></svg>
<div class="t" style="left:710.75px;top:320.00px;font-size:6.36px;color:#2e3138;font-weight:400;line-height:12px;-webkit-text-stroke:0.18px #2e3138;">PREV<span style="position:relative;top:-0.8px">_</span>MONTH<span style="position:relative;top:-0.8px">_</span>REVENUE</div>
<svg style="position:absolute;left:866.75px;top:321.35px" width="8.5" height="8.5" viewBox="0 0 16 16" fill="none" stroke="#6a6e7a" stroke-width="1.44" stroke-linecap="round" stroke-linejoin="round"><path d="M6 2 L5 14 M11 2 L10 14 M2.5 5.8 H14 M2 10.2 H13.5"/></svg>
<div class="t" style="left:877.5px;top:320.30px;font-size:6.55px;color:#2e3138;font-weight:400;line-height:12px;-webkit-text-stroke:0.18px #2e3138;">MOM<span style="position:relative;top:-0.8px">_</span>GROWTH<span style="position:relative;top:-0.8px">_</span>PCT</div>
<div style="position:absolute;left:251.0px;top:338.2px;width:13.5px;height:21.9px;background:#5683e9"></div>
<div style="position:absolute;left:265.5px;top:338.2px;width:13.5px;height:21.9px;background:#5683e9"></div>
<div style="position:absolute;left:280.0px;top:342.1px;width:13.5px;height:18.0px;background:#5683e9"></div>
<div style="position:absolute;left:294.5px;top:338.2px;width:13.5px;height:21.9px;background:#5683e9"></div>
<div style="position:absolute;left:309.0px;top:342.1px;width:13.5px;height:18.0px;background:#5683e9"></div>
<div style="position:absolute;left:323.5px;top:338.2px;width:13.5px;height:21.9px;background:#5683e9"></div>
<div style="position:absolute;left:338.0px;top:342.1px;width:13.5px;height:18.0px;background:#5683e9"></div>
<div style="position:absolute;left:352.5px;top:338.2px;width:13.5px;height:21.9px;background:#5683e9"></div>
<div style="position:absolute;left:367.0px;top:342.1px;width:13.5px;height:18.0px;background:#5683e9"></div>
<div style="position:absolute;left:381.5px;top:338.2px;width:13.5px;height:21.9px;background:#5683e9"></div>
<div style="position:absolute;left:410.6px;top:353.5px;width:12.18px;height:6.6px;background:#5683e9"></div>
<div style="position:absolute;left:423.78px;top:358px;width:12.18px;height:2.1px;background:#5683e9"></div>
<div style="position:absolute;left:436.96px;top:349.2px;width:12.18px;height:10.9px;background:#5683e9"></div>
<div style="position:absolute;left:450.14px;top:342.9px;width:12.18px;height:17.2px;background:#5683e9"></div>
<div style="position:absolute;left:463.32px;top:347px;width:12.18px;height:13.1px;background:#5683e9"></div>
<div style="position:absolute;left:476.5px;top:338.5px;width:12.18px;height:21.6px;background:#5683e9"></div>
<div style="position:absolute;left:489.68px;top:338.5px;width:12.18px;height:21.6px;background:#5683e9"></div>
<div style="position:absolute;left:502.86px;top:356px;width:12.18px;height:4.1px;background:#5683e9"></div>
<div style="position:absolute;left:516.04px;top:351.6px;width:12.18px;height:8.5px;background:#5683e9"></div>
<div style="position:absolute;left:529.22px;top:345px;width:12.18px;height:15.1px;background:#5683e9"></div>
<div style="position:absolute;left:557.0px;top:354px;width:11.7px;height:6.1px;background:#5683e9"></div>
<div style="position:absolute;left:569.7px;top:358px;width:11.7px;height:2.1px;background:#5683e9"></div>
<div style="position:absolute;left:582.4px;top:348.1px;width:11.7px;height:12.0px;background:#5683e9"></div>
<div style="position:absolute;left:595.1px;top:350.2px;width:11.7px;height:9.9px;background:#5683e9"></div>
<div style="position:absolute;left:607.8px;top:344px;width:11.7px;height:16.1px;background:#5683e9"></div>
<div style="position:absolute;left:620.5px;top:346.2px;width:11.7px;height:13.9px;background:#5683e9"></div>
<div style="position:absolute;left:633.2px;top:338.2px;width:11.7px;height:21.9px;background:#5683e9"></div>
<div style="position:absolute;left:645.9px;top:352.1px;width:11.7px;height:8.0px;background:#5683e9"></div>
<div style="position:absolute;left:658.6px;top:350.2px;width:11.7px;height:9.9px;background:#5683e9"></div>
<div style="position:absolute;left:671.3px;top:348.1px;width:11.7px;height:12.0px;background:#5683e9"></div>
<div style="position:absolute;left:698.6px;top:353.8px;width:14.24px;height:6.3px;background:#5683e9"></div>
<div style="position:absolute;left:713.84px;top:358px;width:14.24px;height:2.1px;background:#5683e9"></div>
<div style="position:absolute;left:729.08px;top:350px;width:14.24px;height:10.1px;background:#5683e9"></div>
<div style="position:absolute;left:744.32px;top:350px;width:14.24px;height:10.1px;background:#5683e9"></div>
<div style="position:absolute;left:759.56px;top:344.2px;width:14.24px;height:15.9px;background:#5683e9"></div>
<div style="position:absolute;left:774.8px;top:346.4px;width:14.24px;height:13.7px;background:#5683e9"></div>
<div style="position:absolute;left:790.04px;top:338.2px;width:14.24px;height:21.9px;background:#5683e9"></div>
<div style="position:absolute;left:805.28px;top:352.2px;width:14.24px;height:7.9px;background:#5683e9"></div>
<div style="position:absolute;left:820.52px;top:350px;width:14.24px;height:10.1px;background:#5683e9"></div>
<div style="position:absolute;left:835.76px;top:348px;width:14.24px;height:12.1px;background:#5683e9"></div>
<div style="position:absolute;left:865.5px;top:353.3px;width:16.26px;height:6.8px;background:#5683e9"></div>
<div style="position:absolute;left:882.76px;top:349.1px;width:16.26px;height:11.0px;background:#5683e9"></div>
<div style="position:absolute;left:900.02px;top:338.3px;width:16.26px;height:21.8px;background:#5683e9"></div>
<div style="position:absolute;left:917.29px;top:345px;width:16.26px;height:15.1px;background:#5683e9"></div>
<div style="position:absolute;left:934.55px;top:348px;width:16.26px;height:12.1px;background:#5683e9"></div>
<div style="position:absolute;left:951.81px;top:354.6px;width:16.26px;height:5.5px;background:#5683e9"></div>
<div style="position:absolute;left:969.08px;top:358.6px;width:16.26px;height:1.5px;background:#5683e9"></div>
<div style="position:absolute;left:986.34px;top:358.6px;width:16.26px;height:1.5px;background:#5683e9"></div>
<div class="t" style="left:251.8px;top:360.30px;font-size:8.1px;color:#7a7e88;font-weight:400;line-height:12px;">1/31/2021</div>
<div class="t" style="right:628.00px;top:360.30px;font-size:8.1px;color:#7a7e88;font-weight:400;line-height:12px;">8/31/2025</div>
<div class="t" style="left:411px;top:360.30px;font-size:8.1px;color:#7a7e88;font-weight:400;line-height:12px;">3</div>
<div class="t" style="right:481.60px;top:360.30px;font-size:8.1px;color:#7a7e88;font-weight:400;line-height:12px;">42</div>
<div class="t" style="left:557.3px;top:360.30px;font-size:8.1px;color:#7a7e88;font-weight:400;line-height:12px;">74.97</div>
<div class="t" style="right:340.00px;top:360.30px;font-size:8.1px;color:#7a7e88;font-weight:400;line-height:12px;">1049.58</div>
<div class="t" style="left:698.8px;top:360.30px;font-size:8.1px;color:#7a7e88;font-weight:400;line-height:12px;">74.97</div>
<div class="t" style="right:173.00px;top:360.30px;font-size:8.1px;color:#7a7e88;font-weight:400;line-height:12px;">1049.58</div>
<div class="t" style="left:865.8px;top:360.10px;font-size:8.1px;color:#7a7e88;font-weight:400;line-height:12px;">-24.7</div>
<div class="t" style="right:20.70px;top:360.10px;font-size:8.1px;color:#7a7e88;font-weight:400;line-height:12px;">66.7</div>
<div style="position:absolute;left:214px;top:373.9px;width:796.6px;height:1px;background:#e6e8ee"></div>
<div style="position:absolute;left:0;top:0;width:1024px;height:522px;overflow:hidden">
<div style="position:absolute;left:214.5px;top:374.4px;width:796.1px;height:16.27px;background:#dce5fc"></div>
<div style="position:absolute;left:243.3px;top:374.4px;width:1px;height:16.87px;background:#d3dcf2"></div>
<div style="position:absolute;left:402.9px;top:374.4px;width:1px;height:16.87px;background:#d3dcf2"></div>
<div style="position:absolute;left:549.5px;top:374.4px;width:1px;height:16.87px;background:#d3dcf2"></div>
<div style="position:absolute;left:690.8px;top:374.4px;width:1px;height:16.87px;background:#d3dcf2"></div>
<div style="position:absolute;left:858.0px;top:374.4px;width:1px;height:16.87px;background:#d3dcf2"></div>
<div style="position:absolute;left:214px;top:390.77px;width:796.6px;height:1px;background:#e6e8ee"></div>
<div class="t" style="left:179.20px;width:100px;text-align:center;top:378.13px;font-size:8.0px;color:#a0a4ae;font-weight:400;line-height:12px;">1</div>
<div class="t" style="left:251.8px;top:378.13px;font-size:8.28px;color:#454952;font-weight:400;line-height:12px;">2021-02-01 00:00:00.000</div>
<div class="t" style="right:482.30px;top:378.13px;font-size:8.28px;color:#454952;font-weight:400;line-height:12px;">3</div>
<div class="t" style="right:341.00px;top:378.13px;font-size:8.28px;color:#454952;font-weight:400;line-height:12px;">74.97</div>
<div class="t" style="right:173.80px;top:378.13px;font-size:8.28px;color:#b4b8c0;font-weight:400;line-height:12px;">null</div>
<div class="t" style="right:21.70px;top:378.13px;font-size:8.28px;color:#b4b8c0;font-weight:400;line-height:12px;">null</div>
<div style="position:absolute;left:214px;top:407.64px;width:796.6px;height:1px;background:#e6e8ee"></div>
<div class="t" style="left:179.20px;width:100px;text-align:center;top:395.00px;font-size:8.0px;color:#a0a4ae;font-weight:400;line-height:12px;">2</div>
<div class="t" style="left:251.8px;top:395.00px;font-size:8.28px;color:#454952;font-weight:400;line-height:12px;">2021-03-01 00:00:00.000</div>
<div class="t" style="right:482.30px;top:395.00px;font-size:8.28px;color:#454952;font-weight:400;line-height:12px;">5</div>
<div class="t" style="right:341.00px;top:395.00px;font-size:8.28px;color:#454952;font-weight:400;line-height:12px;">124.95</div>
<div class="t" style="right:173.80px;top:395.00px;font-size:8.28px;color:#454952;font-weight:400;line-height:12px;">74.97</div>
<div class="t" style="right:21.70px;top:395.00px;font-size:8.28px;color:#454952;font-weight:400;line-height:12px;">66.7</div>
<div style="position:absolute;left:214px;top:424.51px;width:796.6px;height:1px;background:#e6e8ee"></div>
<div class="t" style="left:179.20px;width:100px;text-align:center;top:411.88px;font-size:8.0px;color:#a0a4ae;font-weight:400;line-height:12px;">3</div>
<div class="t" style="left:251.8px;top:411.88px;font-size:8.28px;color:#454952;font-weight:400;line-height:12px;">2021-04-01 00:00:00.000</div>
<div class="t" style="right:482.30px;top:411.88px;font-size:8.28px;color:#454952;font-weight:400;line-height:12px;">6</div>
<div class="t" style="right:341.00px;top:411.88px;font-size:8.28px;color:#454952;font-weight:400;line-height:12px;">159.94</div>
<div class="t" style="right:173.80px;top:411.88px;font-size:8.28px;color:#454952;font-weight:400;line-height:12px;">124.95</div>
<div class="t" style="right:21.70px;top:411.88px;font-size:8.28px;color:#454952;font-weight:400;line-height:12px;">28.0</div>
<div style="position:absolute;left:214px;top:441.38px;width:796.6px;height:1px;background:#e6e8ee"></div>
<div class="t" style="left:179.20px;width:100px;text-align:center;top:428.75px;font-size:8.0px;color:#a0a4ae;font-weight:400;line-height:12px;">4</div>
<div class="t" style="left:251.8px;top:428.75px;font-size:8.28px;color:#454952;font-weight:400;line-height:12px;">2021-05-01 00:00:00.000</div>
<div class="t" style="right:482.30px;top:428.75px;font-size:8.28px;color:#454952;font-weight:400;line-height:12px;">9</div>
<div class="t" style="right:341.00px;top:428.75px;font-size:8.28px;color:#454952;font-weight:400;line-height:12px;">234.91</div>
<div class="t" style="right:173.80px;top:428.75px;font-size:8.28px;color:#454952;font-weight:400;line-height:12px;">159.94</div>
<div class="t" style="right:21.70px;top:428.75px;font-size:8.28px;color:#454952;font-weight:400;line-height:12px;">46.9</div>
<div style="position:absolute;left:214px;top:458.25px;width:796.6px;height:1px;background:#e6e8ee"></div>
<div class="t" style="left:179.20px;width:100px;text-align:center;top:445.62px;font-size:8.0px;color:#a0a4ae;font-weight:400;line-height:12px;">5</div>
<div class="t" style="left:251.8px;top:445.62px;font-size:8.28px;color:#454952;font-weight:400;line-height:12px;">2021-06-01 00:00:00.000</div>
<div class="t" style="right:482.30px;top:445.62px;font-size:8.28px;color:#454952;font-weight:400;line-height:12px;">12</div>
<div class="t" style="right:341.00px;top:445.62px;font-size:8.28px;color:#454952;font-weight:400;line-height:12px;">279.88</div>
<div class="t" style="right:173.80px;top:445.62px;font-size:8.28px;color:#454952;font-weight:400;line-height:12px;">234.91</div>
<div class="t" style="right:21.70px;top:445.62px;font-size:8.28px;color:#454952;font-weight:400;line-height:12px;">19.1</div>
<div style="position:absolute;left:214px;top:475.12px;width:796.6px;height:1px;background:#e6e8ee"></div>
<div class="t" style="left:179.20px;width:100px;text-align:center;top:462.49px;font-size:8.0px;color:#a0a4ae;font-weight:400;line-height:12px;">6</div>
<div class="t" style="left:251.8px;top:462.49px;font-size:8.28px;color:#454952;font-weight:400;line-height:12px;">2021-07-01 00:00:00.000</div>
<div class="t" style="right:482.30px;top:462.49px;font-size:8.28px;color:#454952;font-weight:400;line-height:12px;">14</div>
<div class="t" style="right:341.00px;top:462.49px;font-size:8.28px;color:#454952;font-weight:400;line-height:12px;">319.86</div>
<div class="t" style="right:173.80px;top:462.49px;font-size:8.28px;color:#454952;font-weight:400;line-height:12px;">279.88</div>
<div class="t" style="right:21.70px;top:462.49px;font-size:8.28px;color:#454952;font-weight:400;line-height:12px;">14.3</div>
<div style="position:absolute;left:214px;top:491.99px;width:796.6px;height:1px;background:#e6e8ee"></div>
<div class="t" style="left:179.20px;width:100px;text-align:center;top:479.36px;font-size:8.0px;color:#a0a4ae;font-weight:400;line-height:12px;">7</div>
<div class="t" style="left:251.8px;top:479.36px;font-size:8.28px;color:#454952;font-weight:400;line-height:12px;">2021-08-01 00:00:00.000</div>
<div class="t" style="right:482.30px;top:479.36px;font-size:8.28px;color:#454952;font-weight:400;line-height:12px;">16</div>
<div class="t" style="right:341.00px;top:479.36px;font-size:8.28px;color:#454952;font-weight:400;line-height:12px;">359.84</div>
<div class="t" style="right:173.80px;top:479.36px;font-size:8.28px;color:#454952;font-weight:400;line-height:12px;">319.86</div>
<div class="t" style="right:21.70px;top:479.36px;font-size:8.28px;color:#454952;font-weight:400;line-height:12px;">12.5</div>
<div style="position:absolute;left:214px;top:508.86px;width:796.6px;height:1px;background:#e6e8ee"></div>
<div class="t" style="left:179.20px;width:100px;text-align:center;top:496.23px;font-size:8.0px;color:#a0a4ae;font-weight:400;line-height:12px;">8</div>
<div class="t" style="left:251.8px;top:496.23px;font-size:8.28px;color:#454952;font-weight:400;line-height:12px;">2021-09-01 00:00:00.000</div>
<div class="t" style="right:482.30px;top:496.23px;font-size:8.28px;color:#454952;font-weight:400;line-height:12px;">17</div>
<div class="t" style="right:341.00px;top:496.23px;font-size:8.28px;color:#454952;font-weight:400;line-height:12px;">404.83</div>
<div class="t" style="right:173.80px;top:496.23px;font-size:8.28px;color:#454952;font-weight:400;line-height:12px;">359.84</div>
<div class="t" style="right:21.70px;top:496.23px;font-size:8.28px;color:#454952;font-weight:400;line-height:12px;">12.5</div>
<div style="position:absolute;left:214px;top:525.73px;width:796.6px;height:1px;background:#e6e8ee"></div>
<div class="t" style="left:179.20px;width:100px;text-align:center;top:513.10px;font-size:8.0px;color:#a0a4ae;font-weight:400;line-height:12px;">9</div>
<div class="t" style="left:251.8px;top:513.10px;font-size:8.28px;color:#454952;font-weight:400;line-height:12px;">2021-10-01 00:00:00.000</div>
<div class="t" style="right:482.30px;top:513.10px;font-size:8.28px;color:#454952;font-weight:400;line-height:12px;">13</div>
<div class="t" style="right:341.00px;top:513.10px;font-size:8.28px;color:#454952;font-weight:400;line-height:12px;">324.87</div>
<div class="t" style="right:173.80px;top:513.10px;font-size:8.28px;color:#454952;font-weight:400;line-height:12px;">404.83</div>
<div class="t" style="right:21.70px;top:513.10px;font-size:8.28px;color:#454952;font-weight:400;line-height:12px;">-19.8</div>
</div>
<div style="position:absolute;left:214px;top:290.8px;width:1px;height:231.2px;background:#e6e8ee"></div>
<div style="position:absolute;left:1011px;top:315.2px;width:8.2px;height:206.8px;background:#fff"></div>
<svg style="position:absolute;left:1012.20px;top:315.80px" width="6" height="6" viewBox="0 0 16 16" fill="none" stroke="#8a8e96" stroke-width="1.20" stroke-linecap="round" stroke-linejoin="round"><path d="M2 12 L8 4 L14 12 Z" fill="#8a8e96"/></svg>
<div style="position:absolute;left:1012.7px;top:325px;width:4.5px;height:38.2px;background:#8c8c8c;border-radius:3px"></div>
<svg style="position:absolute;left:1012.20px;top:513.40px" width="6" height="6" viewBox="0 0 16 16" fill="none" stroke="#8a8e96" stroke-width="1.20" stroke-linecap="round" stroke-linejoin="round"><path d="M2 4 L8 12 L14 4 Z" fill="#8a8e96"/></svg>
<div style="position:absolute;left:1019.2px;top:290.8px;width:1px;height:231.2px;background:#e6e8ee"></div>
<div style="position:absolute;left:210px;top:522px;width:814px;height:18px;box-sizing:border-box;background:#fff;border-top:1px solid #e3e5ea"></div>
<div style="position:absolute;left:214.8px;top:524.4px;width:13.6px;height:13.6px;background:#e3e6ee;border-radius:4px"></div>
<svg style="position:absolute;left:217.10px;top:526.70px" width="9" height="9" viewBox="0 0 16 16" fill="none" stroke="#444854" stroke-width="1.68" stroke-linecap="round" stroke-linejoin="round"><rect x="2" y="2" width="12" height="12" rx="1.5"/><path d="M6.5 2 V14"/></svg>
<svg style="position:absolute;left:234.00px;top:526.70px" width="9" height="9" viewBox="0 0 16 16" fill="none" stroke="#444854" stroke-width="1.68" stroke-linecap="round" stroke-linejoin="round"><rect x="2" y="2" width="12" height="12" rx="1.5"/><path d="M2 10.5 H14"/></svg>
<svg style="position:absolute;left:912.20px;top:526.90px" width="9" height="9" viewBox="0 0 16 16" fill="none" stroke="#444854" stroke-width="1.56" stroke-linecap="round" stroke-linejoin="round"><path d="M2.5 14 V6.8 L8 2.5 L13.5 6.8 V14 H10.3 V10.5 Q8 8 5.7 10.5 V14 Z"/></svg>
<svg style="position:absolute;left:928.55px;top:526.65px" width="9.5" height="9.5" viewBox="0 0 16 16" fill="none" stroke="#444854" stroke-width="1.44" stroke-linecap="round" stroke-linejoin="round"><rect x="1.5" y="3.5" width="13" height="9" rx="1.5"/><path d="M4 6.5 H5 M7 6.5 H8 M10 6.5 H11 M5 9.5 H11"/></svg>
<svg style="position:absolute;left:945.55px;top:526.65px" width="9.5" height="9.5" viewBox="0 0 16 16" fill="none" stroke="#444854" stroke-width="1.44" stroke-linecap="round" stroke-linejoin="round"><path d="M8 4 Q5 2.5 1.5 3 V13 Q5 12.5 8 14 Q11 12.5 14.5 13 V3 Q11 2.5 8 4 Z M8 4 V14"/></svg>
<svg style="position:absolute;left:967.00px;top:527.10px" width="9" height="9" viewBox="0 0 16 16" fill="none" stroke="#444854" stroke-width="1.44" stroke-linecap="round" stroke-linejoin="round"><path d="M2 2.5 H14 V11 H6 L3 14 V11 H2 Z M5 6 H11 M5 8.5 H9"/></svg>
<div class="t" style="left:979px;top:526.10px;font-size:7.56px;color:#2e3138;font-weight:400;line-height:12px;">Feedback</div>
<div style="position:absolute;left:999.4px;top:456.4px;width:30px;height:24.6px;background:#6aaee2;border-radius:5px"></div>
<svg style="position:absolute;left:1007.20px;top:463.80px" width="10" height="10" viewBox="0 0 16 16" fill="none" stroke="#fff" stroke-width="0.72" stroke-linecap="round" stroke-linejoin="round"><path d="M8 0.5 Q8.9 7.1 15.5 8 Q8.9 8.9 8 15.5 Q7.1 8.9 0.5 8 Q7.1 7.1 8 0.5 Z" fill="#fff"/></svg>
</body></html>
